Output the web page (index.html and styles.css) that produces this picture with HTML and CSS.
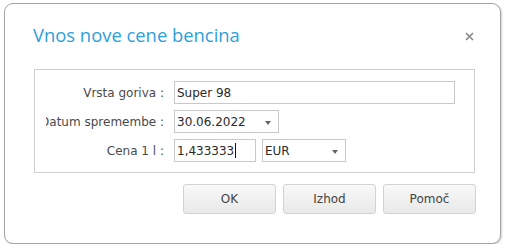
FILE: index.html
```html
<!DOCTYPE html>
<html lang="sl">
<head>
  <meta charset="UTF-8">
  <meta name="viewport" content="width=device-width, initial-scale=1.0">
  <title>Vnos nove cene bencina</title>
  <link rel="stylesheet" href="styles.css">
</head>
<body>
  <!-- Dialog -->
  <div class="dialog">
    <div class="dialog-header">
      <span class="dialog-title">Vnos nove cene bencina</span>
      <span class="close">
        <svg width="9" height="9" viewBox="0 0 9 9">
          <path d="M1 1 L8 8 M8 1 L1 8" stroke="#8a8a8a" stroke-width="1.7" fill="none"/>
        </svg>
      </span>
    </div>

    <!-- Form -->
    <div class="form-box">
      <div class="form-row">
        <div class="label"><span>Vrsta goriva :</span></div>
        <div class="field field-wide">Super 98</div>
      </div>
      <div class="form-row">
        <div class="label"><span>Datum spremembe :</span></div>
        <div class="field field-select field-date">30.06.2022<span class="arrow"></span></div>
      </div>
      <div class="form-row">
        <div class="label"><span>Cena 1 l :</span></div>
        <div class="field field-price">1,433333<span class="caret"></span></div>
        <div class="field field-select field-currency">EUR<span class="arrow"></span></div>
      </div>
    </div>

    <!-- Buttons -->
    <div class="buttons">
      <button>OK</button>
      <button>Izhod</button>
      <button>Pomoč</button>
    </div>
  </div>
</body>
</html>
```

FILE: styles.css
```css
/* General Styles */
body {
  margin: 0;
  background-color: white;
  font-family: "DejaVu Sans", Verdana, sans-serif;
  font-size: 12px;
  color: #444;
}

/* Dialog */
.dialog {
  box-sizing: border-box;
  width: 497px;
  height: 241px;
  margin: 3px 0 0 4px;
  padding: 19px 24px 0 29px;
  border: 1px solid #a3a3a3;
  border-radius: 9px;
  box-shadow: 1px 1px 2px rgba(0, 0, 0, 0.18);
  background-color: white;
}

.dialog-header {
  display: flex;
  justify-content: space-between;
  align-items: center;
  height: 24px;
  margin-bottom: 22px;
}

.dialog-title {
  font-family: "Open Sans", sans-serif;
  font-size: 18.4px;
  line-height: 24px;
  color: #2d9fda;
  margin-left: -1px;
}

.close {
  display: flex;
  margin-right: 2px;
  margin-top: 2px;
}

/* Form */
.form-box {
  box-sizing: border-box;
  width: 441px;
  height: 104px;
  padding: 11px 0 0 11px;
  border: 1px solid #cfcfcf;
  display: flex;
  flex-direction: column;
  gap: 6px;
}

.form-row {
  display: flex;
  align-items: center;
  gap: 6px;
  height: 23px;
}

/* long labels get clipped on the left, like the original */
.label {
  width: 118px;
  margin-right: 4px;
  display: flex;
  justify-content: flex-end;
  white-space: nowrap;
  overflow: hidden;
  color: #4a4a4a;
}

.label span {
  flex-shrink: 0;
}

.field {
  box-sizing: border-box;
  height: 23px;
  padding: 0 2px;
  border: 1px solid #c9c9c9;
  display: flex;
  align-items: center;
  color: #2a2a2a;
  white-space: nowrap;
}

.field-wide {
  width: 281px;
}

.field-date {
  width: 105px;
}

.field-price {
  width: 82px;
}

.field-currency {
  width: 84px;
}

.field-select {
  justify-content: space-between;
  padding-right: 7px;
}

.arrow {
  width: 0;
  height: 0;
  border-left: 3.5px solid transparent;
  border-right: 3.5px solid transparent;
  border-top: 4px solid #666;
  margin-top: 2px;
}

.caret {
  width: 1px;
  height: 15px;
  margin-left: 1px;
  background-color: #111;
}

/* Buttons */
.buttons {
  display: flex;
  justify-content: flex-end;
  gap: 7px;
  width: 442px;
  margin-top: 11px;
}

.buttons button {
  box-sizing: border-box;
  width: 93px;
  height: 30px;
  border: 1px solid #d2d2d2;
  border-radius: 3px;
  background: linear-gradient(#f8f8f8, #e9e9e9);
  font-family: "DejaVu Sans", Verdana, sans-serif;
  font-size: 12px;
  color: #444;
}
```
